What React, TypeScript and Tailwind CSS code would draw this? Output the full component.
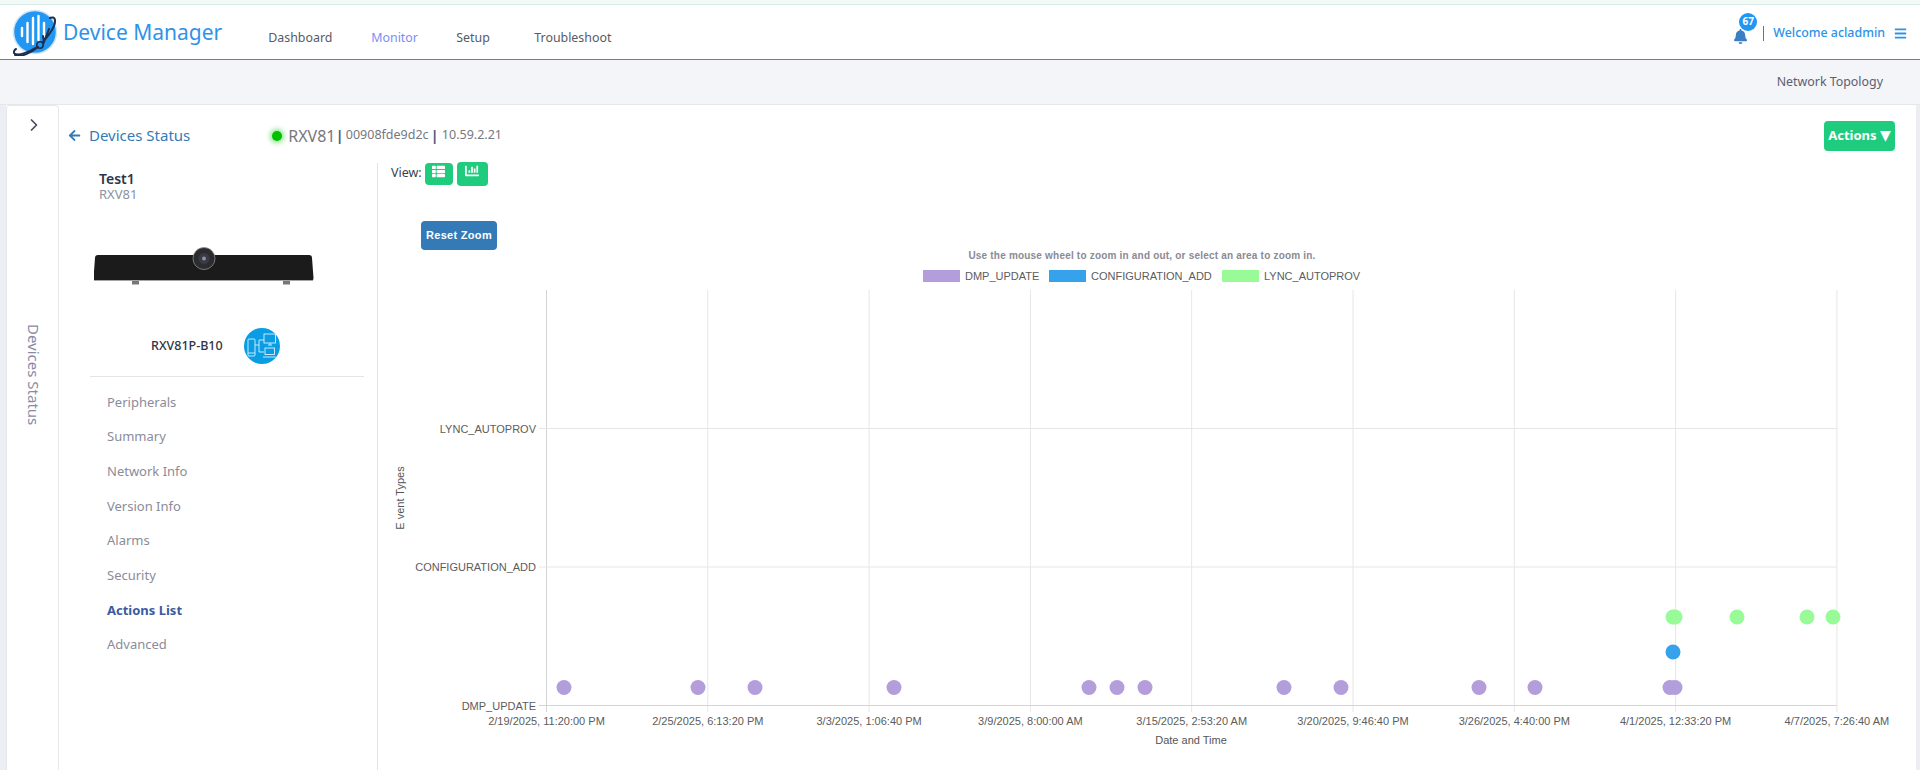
import { FaArrowLeft, FaBars, FaBell, FaChartBar, FaThList } from 'react-icons/fa';
import { ChevronRight } from 'lucide-react';

const navItems = [
  { label: 'Dashboard', className: 'w-[103px] text-[#555b66]' },
  { label: 'Monitor', className: 'w-[85px] text-[#7d8df2]' },
  { label: 'Setup', className: 'w-[78px] text-[#555b66]' },
  { label: 'Troubleshoot', className: 'text-[#555b66]' },
];

const sideItems = ['Peripherals', 'Summary', 'Network Info', 'Version Info', 'Alarms', 'Security', 'Actions List', 'Advanced'];

const PURPLE = '#b39ddb';
const BLUE = '#36a2eb';
const GREEN = '#98fb98';

const xTicks = [
  '2/19/2025, 11:20:00 PM',
  '2/25/2025, 6:13:20 PM',
  '3/3/2025, 1:06:40 PM',
  '3/9/2025, 8:00:00 AM',
  '3/15/2025, 2:53:20 AM',
  '3/20/2025, 9:46:40 PM',
  '3/26/2025, 4:40:00 PM',
  '4/1/2025, 12:33:20 PM',
  '4/7/2025, 7:26:40 AM',
];

const yTicks = ['DMP_UPDATE', 'CONFIGURATION_ADD', 'LYNC_AUTOPROV'];

const dmpPoints = [564, 698, 755, 894, 1089, 1117, 1145, 1284, 1341, 1479, 1535, 1670, 1675];
const lyncPoints = [1673, 1675, 1737, 1807, 1833];

const legend = [
  { name: 'DMP_UPDATE', color: PURPLE, x: 923 },
  { name: 'CONFIGURATION_ADD', color: BLUE, x: 1049 },
  { name: 'LYNC_AUTOPROV', color: GREEN, x: 1222 },
];

const Logo = () => (
  <svg width="48" height="48" viewBox="0 0 48 48" className="shrink-0">
    <circle cx="24" cy="24" r="21.5" fill="#2196f3" stroke="#cfe3f5" strokeWidth="1.5" />
    <g stroke="#fff" strokeWidth="2.4" strokeLinecap="round">
      <path d="M11 20v8M16.500 15v19M22 10v26M27.500 8v24M33 15v14" />
    </g>
    <circle cx="29" cy="37" r="3.200" fill="none" stroke="#1d2f4f" strokeWidth="1.600" />
    <path d="M4 47c5 3 16-2 23-8M32 34C38 27 45 18 44 12c-.5-3-3-3-5-2M38 21l-5 13-1-6" fill="none" stroke="#1d2f4f" strokeWidth="2" strokeLinecap="round" />
    <path d="M26 39C18 44 8 48 4 46c-2-1-1-4 1-5" fill="none" stroke="#1d2f4f" strokeWidth="2" strokeLinecap="round" />
  </svg>
);

const DeviceImage = () => (
  <svg width="220" height="40" viewBox="0 0 220 40" className="block">
    <rect x="38" y="34" width="7" height="3.500" fill="#777" />
    <rect x="189" y="34" width="7" height="3.500" fill="#777" />
    <path d="M4 8h211c2 0 3 1 3 3l1.500 20c0 2-1 3-3 3H2c-2 0-3-1-2.500-3L1 11c0-2 1-3 3-3z" fill="#1b1b1c" />
    <path d="M0 33.500h219" stroke="#a5a5a5" strokeWidth="1" />
    <circle cx="110" cy="11.500" r="11" fill="#2c2c2e" stroke="#8e8e8e" strokeWidth=".8" />
    <circle cx="110" cy="11.500" r="5.500" fill="#3a3a46" />
    <circle cx="110" cy="11.500" r="2" fill="#8d92a8" />
  </svg>
);

const TopologyIcon = () => (
  <div className="w-9 h-9 rounded-full bg-[#0b9de3] flex items-center justify-center">
    <svg width="30" height="26" viewBox="0 0 30 26" fill="none" stroke="#d8f1ff" strokeWidth=".9">
      <rect x="1" y="6" width="7" height="17" rx="1" />
      <path d="M1 20h7M8 12h4M12 7v12M12 7h5M12 19h5" />
      <rect x="17" y="1" width="11.500" height="9" />
      <path d="M21 12h4M23 10v2" />
      <rect x="18" y="15" width="9.500" height="6.500" />
      <path d="M16 24h13" />
    </svg>
  </div>
);

const EventChart = () => (
  <svg width="1538" height="530" viewBox="380 240 1538 530" className="block" fontFamily="'Liberation Sans', Arial, sans-serif">
    <text x="1142" y="259" textAnchor="middle" fontSize="10" fontWeight="700" letterSpacing=".2" fill="#8a8a94">
      Use the mouse wheel to zoom in and out, or select an area to zoom in.
    </text>
    {legend.map((item) => (
      <g key={item.name}>
        <rect x={item.x} y="270" width="37" height="12" fill={item.color} />
        <text x={item.x + 42} y="280" fontSize="11" fill="#5c5c5c">{item.name}</text>
      </g>
    ))}

    {xTicks.map((tick, i) => {
      const x = 546.5 + i * 161.3;
      return (
        <g key={tick}>
          <line x1={x} x2={x} y1="290" y2="712" stroke={i === 0 ? '#d4d4d4' : '#e6e6e6'} />
          <text x={x} y="725" textAnchor="middle" fontSize="11" fill="#5c5c5c">{tick}</text>
        </g>
      );
    })}
    {yTicks.map((tick, i) => {
      const y = 705.5 - i * 138.5;
      return (
        <g key={tick}>
          <line x1="539" x2="1837" y1={y} y2={y} stroke={i === 0 ? '#d4d4d4' : '#e6e6e6'} />
          <text x="536" y={y + 4} textAnchor="end" fontSize="11" fill="#5c5c5c">{tick}</text>
        </g>
      );
    })}

    <text x="1191" y="744" textAnchor="middle" fontSize="11" fill="#555">Date and Time</text>
    <text transform="translate(404 498) rotate(-90)" textAnchor="middle" fontSize="11" fill="#555">E vent Types</text>

    {dmpPoints.map((x) => <circle key={x} cx={x} cy="687.500" r="7.500" fill={PURPLE} />)}
    <circle cx="1673" cy="652" r="7.500" fill={BLUE} />
    {lyncPoints.map((x) => <circle key={x} cx={x} cy="617" r="7.500" fill={GREEN} />)}
  </svg>
);

export default function App() {
  return (
    <div className="h-screen overflow-hidden flex flex-col bg-[#eceef4] font-['Noto_Sans','Open_Sans',sans-serif]">
      <div className="h-[5px] shrink-0 bg-[#f1faf7] border-b border-[#d9ece6]" />
      <header className="h-[55px] shrink-0 bg-white border-b border-[#6a6ff0] flex items-center pl-[11px] pr-[13px]">
        <Logo />
        <span className="ml-[4px] mt-[1px] text-[21px] leading-none text-[#2e93e8]">Device Manager</span>
        <nav className="ml-[46px] mt-[13px] flex text-[12.400px]">
          {navItems.map((item) => (
            <span key={item.label} className={item.className}>{item.label}</span>
          ))}
        </nav>
        <div className="ml-auto flex items-center text-[#2e93e8] mt-[2px]">
          <div className="relative mt-[6px]">
            <FaBell className="text-[15px] text-[#3a7fc4]" />
            <span className="absolute -top-[16px] left-[6px] w-[18px] h-[18px] rounded-full bg-[#2196f3] text-white text-[10px] font-bold flex items-center justify-center">67</span>
          </div>
          <span className="ml-[15px] w-px h-[15px] bg-[#3a7fc4]" />
          <span className="ml-[9px] text-[12.400px] font-medium">Welcome acladmin</span>
          <FaBars className="ml-[9px] text-[13px]" />
        </div>
      </header>
      <div className="h-[45px] shrink-0 bg-[#f4f5f8] border-b border-[#e6e7ec] flex items-center justify-end pr-[37px] text-[12.400px] text-[#5a6072]">
        Network Topology
      </div>

      <div className="flex-1 min-h-0 flex ml-[6px] mr-[4px] bg-white">
        <aside className="w-[53px] shrink-0 border-x border-t border-[#e8e8ec] rounded-t flex flex-col items-center pl-[2px]">
          <ChevronRight className="mt-[9px] w-5 h-5 text-[#444b58]" strokeWidth={2} />
          <div className="mt-[189px] [writing-mode:vertical-rl] text-[15px] text-[#8a8aa8]">Devices Status</div>
        </aside>

        <main className="flex-1 min-w-0 flex flex-col">
          <div className="h-[58px] shrink-0 flex items-center pt-[3px] pl-[9px] pr-[21px]">
            <FaArrowLeft className="text-[13px] text-[#337ab7]" />
            <span className="ml-[8px] text-[15px] text-[#337ab7]">Devices Status</span>
            <span className="ml-[82px] w-[10px] h-[10px] rounded-full bg-[#00c000] shadow-[0_0_5px_2px_rgba(0,192,0,0.45)]" />
            <span className="ml-[6px] text-[16px] text-[#777780]">RXV81</span>
            <span className="ml-[0px] text-[15px] font-bold text-[#4a5f80]">|</span>
            <span className="ml-[2px] text-[12.500px] text-[#777780]">00908fde9d2c</span>
            <span className="ml-[2px] text-[15px] font-bold text-[#4a5f80]">|</span>
            <span className="ml-[3px] text-[12.500px] text-[#777780]">10.59.2.21</span>
            <button className="ml-auto w-[71px] h-[30px] rounded bg-[#1fcb7c] text-white text-[13px] font-bold">
              Actions <span className="font-['DejaVu_Sans',sans-serif] font-normal text-[14px]">▼</span>
            </button>
          </div>

          <div className="flex-1 min-h-0 flex">
            <section className="w-[319px] shrink-0 border-r border-[#e4e4e4] pl-[35px] pr-[13px]">
              <div className="mt-[8px] ml-[5px] text-[14px] leading-[16px] font-semibold text-[#2d3446]">Test1</div>
              <div className="ml-[5px] text-[13px] leading-[15px] text-[#8a93a0]">RXV81</div>
              <div className="mt-[45px]"><DeviceImage /></div>
              <div className="mt-[41px] ml-[57px] flex items-center">
                <span className="text-[12.500px] font-medium text-[#2d3446]">RXV81P-B10</span>
                <span className="ml-[21px]"><TopologyIcon /></span>
              </div>
              <div className="mt-[12px] -ml-[4px] border-t border-[#e4e4e4] pt-[8px] pl-[17px]">
                {sideItems.map((item) => (
                  <div
                    key={item}
                    className={item === 'Actions List'
                      ? 'h-[34.700px] flex items-center text-[13px] font-bold text-[#3b5a9f]'
                      : 'h-[34.700px] flex items-center text-[13px] text-[#8b8b9b]'}
                  >
                    {item}
                  </div>
                ))}
              </div>
            </section>

            <section className="flex-1 min-w-0 relative">
              <div className="flex items-start pl-[13px] text-[12.500px] text-[#3a3f50]">
                <span className="mt-[1px]">View:</span>
                <span className="ml-[3px] w-[28px] h-[22px] rounded bg-[#1fcb7c] flex justify-center pt-[2px] text-white text-[13px]"><FaThList /></span>
                <span className="ml-[4px] -mt-[1px] w-[31px] h-[24px] rounded bg-[#1fcb7c] flex justify-center pt-[2px] text-white text-[14px]"><FaChartBar /></span>
              </div>
              <button className="ml-[43px] mt-[35px] w-[76px] h-[29px] rounded-sm bg-[#337ab7] text-white text-[11px] font-bold font-['Liberation_Sans',sans-serif] tracking-[0.3px]">Reset Zoom</button>
              <div className="absolute left-[2px] top-[77px]">
                <EventChart />
              </div>
            </section>
          </div>
        </main>
      </div>
    </div>
  );
}
